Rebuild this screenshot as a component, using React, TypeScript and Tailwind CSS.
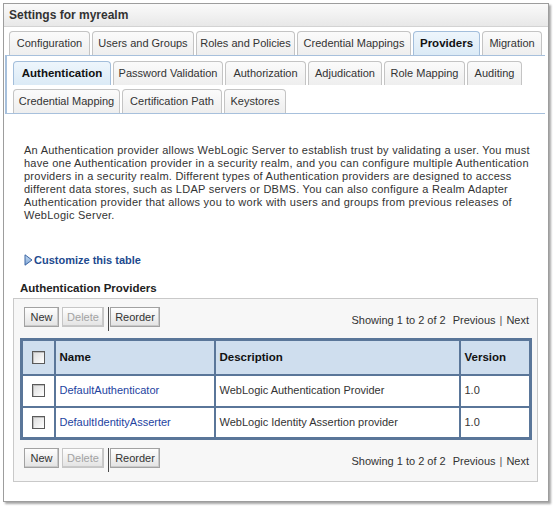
import React from "react";

type TabDef = { label: string; w: string; active?: boolean };

function Tab({ label, w, active }: TabDef) {
  return (
    <div
      className={
        w +
        " h-[24px] flex items-center justify-center rounded-t-[4px] border border-b-0 whitespace-nowrap " +
        (active
          ? "bg-gradient-to-b from-[#eef6fc] to-[#dbeaf6] border-[#a3bedb] font-bold text-[#111] text-[11.5px]"
          : "bg-gradient-to-b from-[#fbfbfb] to-[#eeeeee] border-[#c4c4c4] text-[#333]")
      }
    >
      {label}
    </div>
  );
}

const topTabs: TabDef[] = [
  { label: "Configuration", w: "w-[81px]" },
  { label: "Users and Groups", w: "w-[102px]" },
  { label: "Roles and Policies", w: "w-[99px]" },
  { label: "Credential Mappings", w: "w-[114px]" },
  { label: "Providers", w: "w-[67px]", active: true },
  { label: "Migration", w: "w-[60px]" },
];

const subRow1: TabDef[] = [
  { label: "Authentication", w: "w-[98px]", active: true },
  { label: "Password Validation", w: "w-[110px]" },
  { label: "Authorization", w: "w-[81px]" },
  { label: "Adjudication", w: "w-[74px]" },
  { label: "Role Mapping", w: "w-[81px]" },
  { label: "Auditing", w: "w-[55px]" },
];

const subRow2: TabDef[] = [
  { label: "Credential Mapping", w: "w-[107px]" },
  { label: "Certification Path", w: "w-[100px]" },
  { label: "Keystores", w: "w-[62px]" },
];

function Btn({ label, w, disabled }: { label: string; w: string; disabled?: boolean }) {
  return (
    <div
      className={
        w +
        " h-[20px] flex items-center justify-center border bg-gradient-to-b from-[#fefefe] to-[#e3e3e3] shadow-[inset_-1px_-1px_0_#c9c9c9] " +
        (disabled ? "border-[#c6c6c6] text-[#a3a3a3]" : "border-[#a2a2a2] text-[#333]")
      }
    >
      {label}
    </div>
  );
}

function ButtonRow() {
  return (
    <div className="flex items-center justify-between">
      <div className="flex items-start">
        <Btn label="New" w="w-[35px]" />
        <div className="w-[3px]" />
        <Btn label="Delete" w="w-[42px]" disabled />
        <div className="w-[4px]" />
        <div className="w-[1px] h-[24px] bg-[#4a4a4a]" />
        <div className="w-[1px]" />
        <Btn label="Reorder" w="w-[50px]" />
      </div>
      <div className="flex items-center text-[#333] pt-[2px]">
        <span>Showing 1 to 2 of 2</span>
        <span className="ml-[7px]">Previous</span>
        <span className="mx-[4px] text-[#555]">|</span>
        <span>Next</span>
      </div>
    </div>
  );
}

function Check() {
  return (
    <div className="w-[13px] h-[13px] border border-[#5a5a5a] bg-gradient-to-br from-[#dcdcdc] to-white shadow-[inset_1px_1px_0_#bdbdbd]" />
  );
}

export default function App() {
  const cell = "border-[2px] border-[#5a7699] ";
  return (
    <div className="w-[554px] h-[509px] bg-white font-['Liberation_Sans',Arial,sans-serif] text-[11px] text-[#333] pt-[3px] pl-[3px]">
      <div className="w-[546px] h-[499px] border border-[#9d9d9d] bg-white shadow-[2px_2px_2px_rgba(0,0,0,0.35)] flex flex-col">
        {/* header */}
        <div className="h-[23px] shrink-0 bg-gradient-to-b from-[#fafafa] to-[#e8e8e8] border-b border-[#d3d3d3] flex items-center pl-[5px] font-bold text-[12px] text-[#333]">
          Settings for myrealm
        </div>

        {/* top tabs */}
        <div className="mt-[4px] ml-[1px] mr-[3px] border-b border-[#a7c0dc] pl-[4px] flex gap-[2px]">
          {topTabs.map((t) => (
            <Tab key={t.label} {...t} />
          ))}
        </div>

        {/* sub tabs */}
        <div className="ml-[1px] mr-[3px] border-l-[2px] border-b border-[#a7c0dc] pl-[6px] pt-[5px] flex flex-col gap-[4px]">
          <div className="flex gap-[2px]">
            {subRow1.map((t) => (
              <Tab key={t.label} {...t} />
            ))}
          </div>
          <div className="flex gap-[2px]">
            {subRow2.map((t) => (
              <Tab key={t.label} {...t} />
            ))}
          </div>
        </div>

        {/* description */}
        <div className="mt-[30px] pl-[20px] leading-[13px] whitespace-nowrap tracking-[0.25px] text-[#333]">
          An Authentication provider allows WebLogic Server to establish trust by validating a user. You must
          <br />
          have one Authentication provider in a security realm, and you can configure multiple Authentication
          <br />
          providers in a security realm. Different types of Authentication providers are designed to access
          <br />
          different data stores, such as LDAP servers or DBMS. You can also configure a Realm Adapter
          <br />
          Authentication provider that allows you to work with users and groups from previous releases of
          <br />
          WebLogic Server.
        </div>

        {/* customize */}
        <div className="mt-[31px] pl-[20px] flex items-center h-[14px] gap-[1px]">
          <svg width="9" height="12" viewBox="0 0 9 12">
            <defs>
              <linearGradient id="tri" x1="0" y1="0" x2="0" y2="1">
                <stop offset="0" stopColor="#c7dcf3" />
                <stop offset="1" stopColor="#7fa6d6" />
              </linearGradient>
            </defs>
            <polygon points="1,0.8 8,6 1,11.2" fill="url(#tri)" stroke="#3c66a4" strokeWidth="1" strokeLinejoin="round" />
          </svg>
          <span className="font-bold text-[#1d4a8e] text-[11px]">Customize this table</span>
        </div>

        {/* section title */}
        <div className="mt-[15px] pl-[16px] h-[14px] flex items-center font-bold text-[11.5px] text-[#222]">
          Authentication Providers
        </div>

        {/* box */}
        <div className="mt-[2px] ml-[9px] w-[525px] h-[184px] border border-[#c9c9c9] bg-[#f7f7f7] pt-[8px] pl-[10px] pr-[8px]">
          <ButtonRow />
          <table className="mt-[7px] -ml-[4px] w-[512px] border-collapse border-[3px] border-[#5a7699] table-fixed">
            <colgroup>
              <col className="w-[33px]" />
              <col className="w-[160px]" />
              <col className="w-[245px]" />
              <col />
            </colgroup>
            <thead>
              <tr className="h-[35px] bg-[#cfdeee]">
                <th className={cell + "align-middle"}>
                  <div className="flex justify-center">
                    <Check />
                  </div>
                </th>
                <th className={cell + "text-left pl-[4px] font-bold text-[#111] text-[11.5px]"}>Name</th>
                <th className={cell + "text-left pl-[4px] font-bold text-[#111] text-[11.5px]"}>Description</th>
                <th className={cell + "text-left pl-[4px] font-bold text-[#111] text-[11.5px]"}>Version</th>
              </tr>
            </thead>
            <tbody>
              <tr className="h-[32px] bg-white">
                <td className={cell}>
                  <div className="flex justify-center">
                    <Check />
                  </div>
                </td>
                <td className={cell + "pl-[4px] text-[#23439f]"}>DefaultAuthenticator</td>
                <td className={cell + "pl-[4px]"}>WebLogic Authentication Provider</td>
                <td className={cell + "pl-[4px]"}>1.0</td>
              </tr>
              <tr className="h-[32px] bg-white">
                <td className={cell}>
                  <div className="flex justify-center">
                    <Check />
                  </div>
                </td>
                <td className={cell + "pl-[4px] text-[#23439f]"}>DefaultIdentityAsserter</td>
                <td className={cell + "pl-[4px]"}>WebLogic Identity Assertion provider</td>
                <td className={cell + "pl-[4px]"}>1.0</td>
              </tr>
            </tbody>
          </table>
          <div className="mt-[8px]">
            <ButtonRow />
          </div>
        </div>
      </div>
    </div>
  );
}
